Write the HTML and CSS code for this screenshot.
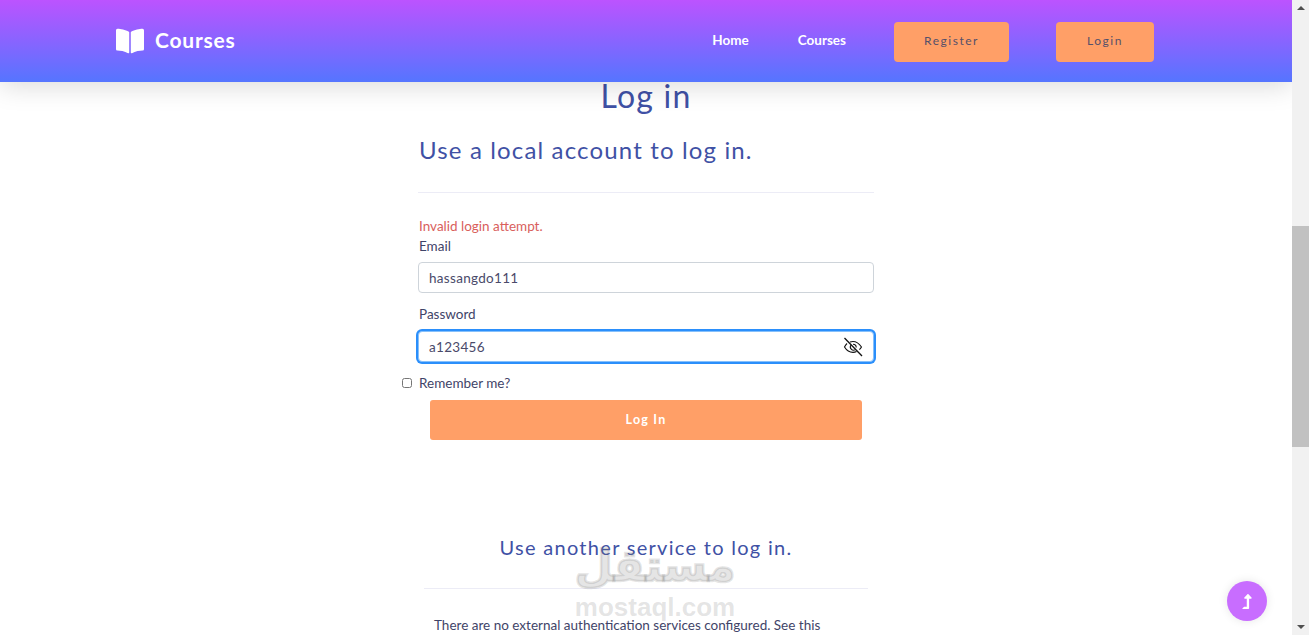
FILE: index.html
```html
<!DOCTYPE html>
<html>
  <head>
    <meta charset="utf-8">
    <title>Log in</title>
    <link rel="stylesheet" href="styles.css">
  </head>
  <body>
    <div id="page">
      <header id="header">
        <a class="brand" href="#">
          <svg class="brand-icon" viewBox="0 0 576 512" preserveAspectRatio="none"><path d="M542.22 32.05c-54.8 3.11-163.72 14.43-230.96 55.59-4.64 2.84-7.27 7.89-7.27 13.17v363.87c0 11.55 12.63 18.85 23.28 13.49 69.18-34.82 169.23-44.32 218.7-46.92 16.89-.89 30.02-14.43 30.02-30.66V62.75c.01-17.71-15.35-31.74-33.77-30.7zM264.73 87.64C197.5 46.48 88.58 35.17 33.78 32.05 15.36 31.01 0 45.04 0 62.75V400.6c0 16.24 13.13 29.78 30.02 30.66 49.49 2.6 149.59 12.11 218.77 46.95 10.62 5.35 23.21-1.94 23.21-13.46V100.63c0-5.29-2.62-10.14-7.27-12.99z"/></svg>
          <span class="brand-name">Courses</span>
        </a>
        <nav class="nav">
          <a class="nav-link nav-home" href="#">Home</a>
          <a class="nav-link nav-courses" href="#">Courses</a>
          <a class="nav-btn nav-register" href="#">Register</a>
          <a class="nav-btn nav-login" href="#">Login</a>
        </nav>
      </header>

      <main id="content">
        <h1>Log in</h1>
        <section class="local">
          <h4>Use a local account to log in.</h4>
          <hr>
          <p class="error">Invalid login attempt.</p>
          <label class="field-label" for="email">Email</label>
          <input class="field" id="email" type="text" value="hassangdo111">
          <label class="field-label" for="password">Password</label>
          <div class="password-box">
            <input class="field field-focus" id="password" type="text" value="a123456">
            <svg class="eye" viewBox="0 0 20 20" fill="none" stroke="#111" stroke-width="1.100">
              <path d="M4 6.500c-1 1-1.800 2.100-2.500 3.500 2.200 3.600 5 5.400 8.500 5.400 1.300 0 2.500-.3 3.600-.8M7 5.100c1-.4 2-.6 3-.6 3.200 0 6 1.900 8.500 5.500-.6 1-1.300 1.900-2.100 2.700"/>
              <path d="M8 8a3.200 3.200 0 0 0 4.300 4.600M10 7.200a3.200 3.200 0 0 1 3.200 3.200"/>
              <path d="M1.500 1l17.500 18" stroke-width="1.300"/>
            </svg>
          </div>
          <div class="remember">
            <input type="checkbox" id="remember">
            <label for="remember">Remember me?</label>
          </div>
          <button class="submit">Log In</button>
        </section>
        <section class="external">
          <h5>Use another service to log in.</h5>
          <hr>
          <p>There are no external authentication services configured. See this</p>
        </section>
      </main>

      <div class="watermark">
        <div class="wm-ar">مستقل</div>
        <div class="wm-en">mostaql.com</div>
      </div>

      <a class="to-top" href="#">
        <svg viewBox="0 0 320 512"><path d="M313.553 119.669L209.587 7.666c-9.485-10.214-25.676-10.229-35.174 0L70.438 119.669C56.232 134.969 67.062 160 88.025 160H152v272H68.024a11.996 11.996 0 0 0-8.485 3.515l-56 56C-4.021 499.074 1.333 512 12.024 512H208c13.255 0 24-10.745 24-24V160h63.966c20.878 0 31.851-24.969 17.587-40.331z"/></svg>
      </a>
    </div>

    <div id="scrollbar">
      <span class="arrow-up"></span>
      <div class="track"><div class="thumb"></div></div>
      <span class="arrow-down"></span>
    </div>
  </body>
</html>
```

FILE: styles.css
```css
html, body {
  height: 100%;
}
body {
  margin: 0;
  display: flex;
  overflow: hidden;
  background: #fff;
  font-family: "Lato", sans-serif;
  font-size: 14px;
  color: #3f4468;
}
#page {
  position: relative;
  flex: 1;
  height: 635px;
  overflow: hidden;
}
a {
  text-decoration: none;
}

/* header */
#header {
  position: relative;
  z-index: 2;
  height: 82px;
  display: flex;
  align-items: center;
  justify-content: space-between;
  padding: 0 138px 0 116px;
  background: linear-gradient(180deg, #bc53ff 0%, #5575ff 100%);
  box-shadow: 0 4px 25px rgba(0, 0, 0, 0.15);
}
.brand {
  display: flex;
  align-items: center;
  gap: 11px;
  color: #fff;
  font-size: 21px;
  font-weight: 700;
  letter-spacing: 0.8px;
}
.brand-icon {
  width: 28px;
  height: 28px;
  fill: #fff;
}
.brand-name {
  line-height: 24px;
  margin-top: -3px;
}
.nav {
  display: flex;
  align-items: center;
  margin-top: 2px;
}
.nav-link {
  color: #fff;
  font-size: 13.500px;
  font-weight: 700;
  margin-top: -4px;
}
.nav-home {
  margin-right: 49px;
}
.nav-courses {
  margin-right: 48px;
}
.nav-btn {
  height: 40px;
  line-height: 38px;
  text-align: center;
  background: #ff9f67;
  border-radius: 4px;
  color: #55506a;
  font-size: 12px;
  letter-spacing: 1.500px;
}
.nav-register {
  width: 115px;
  margin-right: 47px;
}
.nav-login {
  width: 98px;
}

/* form */
#content {
  width: 456px;
  margin: 0 auto;
}
h1, h4, h5 {
  font-weight: 400;
  color: #3f51a5;
  margin: 0;
}
h1 {
  font-size: 32px;
  line-height: 38px;
  letter-spacing: 1.200px;
  text-align: center;
  margin-top: -5px;
}
h4 {
  font-size: 24px;
  line-height: 30px;
  letter-spacing: 1.150px;
  margin-top: 20px;
  padding-left: 1px;
}
hr {
  border: 0;
  border-top: 1px solid #ececf6;
  margin: 27px 0 0;
}
.error {
  margin: 25px 0 0;
  padding-left: 1px;
  line-height: 17px;
  font-size: 13.500px;
  color: #d9605c;
}
.field-label {
  display: block;
  margin-top: 3px;
  padding-left: 1px;
  line-height: 17px;
  font-size: 13.500px;
}
.field {
  display: block;
  box-sizing: border-box;
  width: 100%;
  height: 31px;
  margin-top: 7px;
  padding: 0 10px;
  border: 1px solid #ced4da;
  border-radius: 4px;
  outline: 0;
  font-family: inherit;
  font-size: 13.500px;
  letter-spacing: 0.3px;
  color: #4a4a6a;
}
.field + .field-label {
  margin-top: 13px;
}
.password-box {
  position: relative;
  margin-top: 8px;
}
.field-focus {
  margin: 0;
  border-color: #86c0fb;
  box-shadow: 0 0 0 2px #2b8ffb;
}
.eye {
  position: absolute;
  top: 6px;
  right: 11px;
  width: 20px;
  height: 20px;
}
.remember {
  position: relative;
  margin-top: 13px;
  padding-left: 1px;
  line-height: 17px;
  font-size: 13.500px;
}
.remember input {
  position: absolute;
  left: -16px;
  top: 3px;
  width: 10px;
  height: 10px;
  margin: 0;
}
.submit {
  display: block;
  width: 432px;
  height: 40px;
  margin: 8px 0 0 12px;
  padding-bottom: 3px;
  border: 0;
  border-radius: 3px;
  background: #ff9f67;
  color: #fff;
  font-family: inherit;
  font-size: 12.500px;
  font-weight: 700;
  letter-spacing: 1.200px;
}
.external {
  width: 444px;
  margin: 92px 0 0 6px;
}
h5 {
  font-size: 20px;
  line-height: 30px;
  letter-spacing: 1.300px;
  text-align: center;
}
.external hr {
  margin-top: 26px;
}
.external p {
  margin: 28px 0 0;
  padding-left: 10px;
  line-height: 17px;
  font-size: 13.500px;
  white-space: nowrap;
}

/* overlays */
.watermark {
  position: absolute;
  left: 570px;
  top: 538px;
  width: 170px;
  text-align: center;
  color: rgba(120, 120, 120, 0.2);
  font-weight: 700;
  pointer-events: none;
}
.wm-ar {
  font-family: "DejaVu Sans", sans-serif;
  font-size: 44px;
  line-height: 56px;
  -webkit-text-stroke: 2.500px rgba(120, 120, 120, 0.2);
  paint-order: stroke fill;
}
.wm-en {
  font-family: "Liberation Sans", sans-serif;
  font-size: 26px;
  line-height: 26px;
}
.to-top {
  position: absolute;
  right: 25px;
  top: 581px;
  width: 40px;
  height: 40px;
  display: flex;
  align-items: center;
  justify-content: center;
  border-radius: 50%;
  background: #c86dff;
  box-shadow: 0 0 10px rgba(0, 0, 0, 0.1);
}
.to-top svg {
  width: 10px;
  height: 15px;
  fill: #fff;
}

/* scrollbar */
#scrollbar {
  width: 17px;
  height: 635px;
  display: flex;
  flex-direction: column;
  align-items: center;
  background: #f1f1f1;
}
.track {
  flex: 1;
  width: 100%;
}
.thumb {
  width: 100%;
  height: 221px;
  margin-top: 210px;
  background: #c1c1c1;
}
.arrow-up, .arrow-down {
  width: 0;
  height: 0;
  margin: 6px 0;
  border-left: 4px solid transparent;
  border-right: 4px solid transparent;
}
.arrow-up {
  border-bottom: 4px solid #505050;
}
.arrow-down {
  border-top: 4px solid #505050;
}
```
